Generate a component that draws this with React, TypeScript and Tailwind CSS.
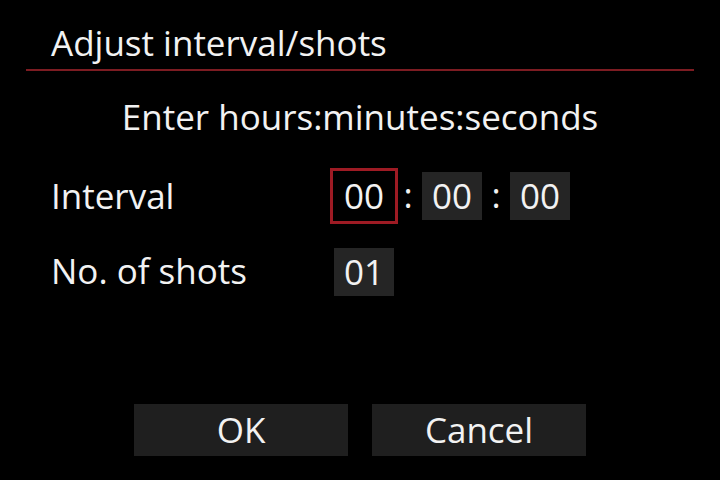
const font = { fontFamily: '"Open Sans", "Noto Sans", sans-serif' };

function Field({ value, focused }: { value: string; focused?: boolean }) {
    return (
        <div
            className={
                focused
                    ? 'w-[60px] h-[48px] flex items-center justify-center bg-black outline-[3px] outline-solid outline-[#9e1b24] outline-offset-[1px] text-[35px] leading-[40px] text-[#f2f2f2]'
                    : 'w-[60px] h-[48px] flex items-center justify-center bg-[#252525] text-[35px] leading-[40px] text-[#f2f2f2]'
            }
        >
            {value}
        </div>
    );
}

function Colon() {
    return <div className="w-[28px] flex items-center justify-center text-[35px] leading-[40px] text-[#f2f2f2] pb-[3px]">:</div>;
}

export default function App() {
    return (
        <div className="w-[720px] h-[480px] bg-black text-[#f2f2f2] flex flex-col overflow-hidden" style={font}>
            <div className="pl-[51px] pt-[23px] h-[69px] text-[35px] leading-[40px]">Adjust interval/shots</div>
            <div className="mx-[26px] h-[2px] bg-[#7d1c22]" />

            <div className="mt-[26px] text-center text-[35px] leading-[40px]">Enter hours:minutes:seconds</div>

            <div className="mt-[35px] flex items-center h-[48px]">
                <div className="w-[334px] pl-[51px] text-[35px] leading-[40px]">Interval</div>
                <Field value="00" focused />
                <Colon />
                <Field value="00" />
                <Colon />
                <Field value="00" />
            </div>

            <div className="mt-[28px] flex items-center h-[48px]">
                <div className="w-[334px] pl-[51px] pb-[3px] text-[35px] leading-[40px]">No. of shots</div>
                <Field value="01" />
            </div>

            <div className="mt-[108px] flex justify-center gap-[24px]">
                <div className="w-[214px] h-[52px] bg-[#1f1f1f] flex items-center justify-center text-[35px] leading-[40px]">OK</div>
                <div className="w-[214px] h-[52px] bg-[#1f1f1f] flex items-center justify-center text-[35px] leading-[40px]">Cancel</div>
            </div>
        </div>
    );
}
